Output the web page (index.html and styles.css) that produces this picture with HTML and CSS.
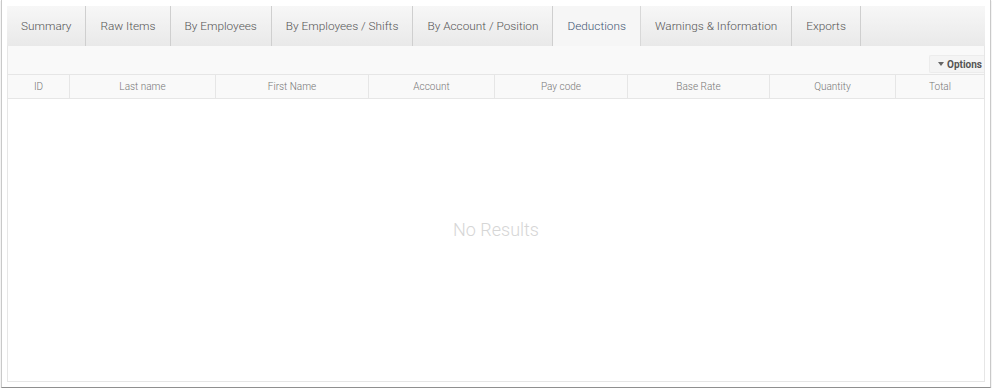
FILE: index.html
```html
<!DOCTYPE html>
<html lang="en">
  <head>
    <meta charset="UTF-8" />
    <meta name="viewport" content="width=device-width, initial-scale=1.0" />
    <title>Payroll Report</title>
    <link rel="stylesheet" href="styles.css">
  </head>
  <body>
    <div class="window">
      <ul class="tabs">
        <li class="tab">Summary</li>
        <li class="tab">Raw Items</li>
        <li class="tab">By Employees</li>
        <li class="tab">By Employees / Shifts</li>
        <li class="tab">By Account / Position</li>
        <li class="tab active">Deductions</li>
        <li class="tab">Warnings &amp; Information</li>
        <li class="tab">Exports</li>
      </ul>

      <div class="panel">
        <div class="toolbar">
          <button class="btn-options">
            <span class="caret"></span>Options
          </button>
        </div>

        <div class="grid-head">
          <div class="col col-id">ID</div>
          <div class="col col-last">Last name</div>
          <div class="col col-first">First Name</div>
          <div class="col col-account">Account</div>
          <div class="col col-paycode">Pay code</div>
          <div class="col col-rate">Base Rate</div>
          <div class="col col-qty">Quantity</div>
          <div class="col col-total">Total</div>
        </div>

        <div class="grid-body">
          <p class="empty">No Results</p>
        </div>
      </div>
    </div>
  </body>
</html>
```

FILE: styles.css
```css
:root {
  --border: #e6e6e6;
  --tab-border: #cfcfcf;
  --text: #555;
  --muted: #8a8a8a;
  --active: #3f5573;
}

html,
body {
  margin: 0;
  padding: 0;
  background: #fff;
  font-family: Roboto, "Liberation Sans", sans-serif;
  color: var(--text);
}

.window {
  box-sizing: border-box;
  width: 990px;
  height: 388px;
  margin-left: 1px;
  padding: 6px 5px 5px;
  background: #fff;
  border: 1px solid #c9c9c9;
  border-top: none;
  border-bottom: 1px solid #8f8f8f;
  box-shadow: 0 1px 1px rgba(0, 0, 0, 0.25);
  display: flex;
  flex-direction: column;
}

.tabs {
  display: flex;
  margin: 0;
  padding: 0;
  list-style: none;
  height: 40px;
  background: linear-gradient(#f7f7f7, #e9e9e9);
}

.tab {
  display: flex;
  align-items: center;
  padding: 0 14px;
  font-size: 11.8px;
  font-weight: 300;
  color: #555;
  border-right: 1px solid var(--tab-border);
  cursor: pointer;
}

.tab.active {
  background: #f6f6f6;
  color: var(--active);
  border-right-color: #d8d8d8;
}

.panel {
  flex: 1;
  display: flex;
  flex-direction: column;
  border: 1px solid var(--border);
  border-top: none;
}

.toolbar {
  height: 28px;
  display: flex;
  align-items: flex-end;
  justify-content: flex-end;
  background: #f9f9f9;
  border-bottom: 1px solid var(--border);
}

.btn-options {
  height: 18px;
  margin-bottom: 1px;
  padding: 0 2px 0 8px;
  display: flex;
  align-items: center;
  gap: 3px;
  font-family: Roboto, "Liberation Sans", sans-serif;
  font-size: 10px;
  font-weight: 700;
  color: #555;
  background: #f4f4f4;
  border: 1px solid #ececec;
  border-right: none;
  border-radius: 2px 0 0 2px;
}

.caret {
  width: 0;
  height: 0;
  border-left: 3.5px solid transparent;
  border-right: 3.5px solid transparent;
  border-top: 4px solid #666;
}

.grid-head {
  display: flex;
  height: 23px;
  background: #f9f9f9;
  border-bottom: 1px solid var(--border);
}

.col {
  display: flex;
  align-items: center;
  justify-content: center;
  font-size: 10px;
  font-weight: 300;
  color: #777;
  border-right: 1px solid var(--border);
  box-sizing: border-box;
}

.col-id { width: 62px; }
.col-last { width: 146px; }
.col-first { width: 153px; }
.col-account { width: 126px; }
.col-paycode { width: 133px; }
.col-rate { width: 142px; }
.col-qty { width: 126px; }
.col-total { flex: 1; border-right: none; }

.grid-body {
  flex: 1;
  display: flex;
  justify-content: center;
  padding-top: 120px;
  background: #fff;
}

.empty {
  margin: 0;
  font-size: 18px;
  font-weight: 300;
  color: #d6d6d6;
}
```
